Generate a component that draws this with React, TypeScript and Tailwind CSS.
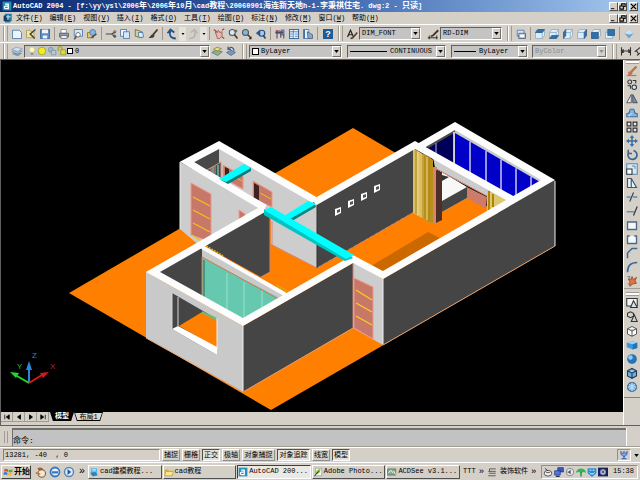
import type { ReactNode } from "react";

const BLUE = "#3a6ea5";
const PALE = "#d6e8f6";
const INK = "#303438";

const ICONS: Record<string, ReactNode> = {
  new: <path d="M2 3h9l3 3v8H2z" fill="#eaf4fc" stroke={BLUE} />,
  open: (
    <>
      <path d="M2 3h5l1 2h4v8H2z" fill="#f0e4a0" stroke="#a89050" />
      <path d="M14 2L7 8l6 6" fill="none" stroke="#404830" strokeWidth="2" />
    </>
  ),
  save: (
    <>
      <path d="M2 2h12v12H2z" fill="#5a8fc4" stroke="#2c5a8c" />
      <path d="M4 2h8v5H4zM5 10h6v4H5z" fill="#eef4fa" />
    </>
  ),
  print: (
    <>
      <path d="M4 2h7v5H4z" fill="#fff" stroke="#707880" />
      <path d="M2 7h12v5H2z" fill="#8c98a8" stroke="#505860" />
      <path d="M4 10h8v4H4z" fill="#e8eef8" stroke="#606870" />
    </>
  ),
  preview: (
    <>
      <path d="M3 2h11v9H3z" fill={PALE} stroke={BLUE} />
      <circle cx="8" cy="9" r="3" fill="#fff" stroke="#555" />
      <path d="M6 11l-3 4" stroke="#555" strokeWidth="2" />
    </>
  ),
  publish: (
    <>
      <path d="M2 6h8v7H2z" fill="#e8c860" stroke="#806820" />
      <circle cx="9" cy="6" r="4" fill="#8cb4d8" stroke={BLUE} />
      <path d="M7 13l7-5" stroke="#404850" strokeWidth="2" />
    </>
  ),
  cut: (
    <>
      <path d="M1 8h8M9 8l5-3M9 8l5 4" stroke="#404850" strokeWidth="1.6" />
      <circle cx="13" cy="5" r="1.6" fill="none" stroke="#804040" />
      <circle cx="13" cy="11" r="1.6" fill="none" stroke="#404850" />
    </>
  ),
  copy: (
    <>
      <path d="M2 2h8v9H2z" fill="#eaf4fc" stroke={BLUE} />
      <path d="M6 5h8v9H6z" fill={PALE} stroke={BLUE} />
    </>
  ),
  paste: (
    <>
      <path d="M3 2l9 3v8l-9-2z" fill="#d8d090" stroke="#606030" />
      <path d="M7 6h6l1 6-6 1z" fill="#dcecf8" stroke={BLUE} />
    </>
  ),
  brush: (
    <>
      <path d="M14 2L8 9" stroke="#503020" strokeWidth="2.4" />
      <path d="M9 8c-4 0-4 4-7 5 4 1 8 0 8-3z" fill="#483838" />
    </>
  ),
  undo: <path d="M13 14C5 14 4 8 6 4M2 7l4-5 5 4" fill="none" stroke="#20508c" strokeWidth="2.4" />,
  redo: <path d="M3 14c8 0 9-6 7-10M14 7l-4-5-5 4" fill="none" stroke="#b4b4b0" strokeWidth="2" />,
  pan: (
    <>
      <path d="M3 5l3 1 1-3 2 3 3-1v6l-3 3H6z" fill="#e8b8a8" stroke="#904848" />
      <path d="M1 2l4 3M12 12l3 2M12 3l3-2" stroke="#b04040" strokeWidth="1.4" />
    </>
  ),
  zoom: (
    <>
      <circle cx="7" cy="6" r="4" fill={PALE} stroke="#505860" strokeWidth="1.4" />
      <path d="M10 9l4 5" stroke="#503828" strokeWidth="2.2" />
      <path d="M12 2v4M10 4h4" stroke="#444" />
    </>
  ),
  zoomWindow: (
    <>
      <circle cx="6" cy="6" r="4" fill="#88b4dc" stroke="#505860" strokeWidth="1.4" />
      <path d="M9 9l4 4" stroke="#404040" strokeWidth="2.2" />
      <path d="M14 11v4h-4z" fill="#222" />
    </>
  ),
  zoomPrev: (
    <>
      <circle cx="9" cy="7" r="4" fill="#a8cce8" stroke="#20508c" strokeWidth="1.6" />
      <path d="M11 10l3 4" stroke="#404040" strokeWidth="2" />
      <path d="M1 7l6-5v9z" fill="#28588c" />
    </>
  ),
  props: (
    <>
      <path d="M2 3h6v5H2z" fill="#d85868" />
      <path d="M9 2h5v8H9z" fill="#6078b8" />
      <path d="M2 6h10M4 3v11M9 4v9M13 9v5" stroke="#50485c" strokeWidth="1.4" />
    </>
  ),
  design: (
    <>
      <path d="M2 2h12v12H2z" fill="#e8f2fa" stroke={BLUE} strokeWidth="1.4" />
      <path d="M7 2v12M2 5h12M9 8h4M9 11h4M3 8h3M3 11h3" stroke={BLUE} />
    </>
  ),
  palettes: (
    <>
      <path d="M2 2h7v12H2z" fill="#e8f2fa" stroke={BLUE} />
      <path d="M3 2v12" stroke={BLUE} strokeWidth="2" />
      <path d="M7 5l7 4v5H8z" fill="#88a8c8" stroke="#405878" />
    </>
  ),
  textStyle: (
    <>
      <path d="M2 12L6 3l4 9M4 9h5" fill="none" stroke="#222" strokeWidth="1.6" />
      <path d="M15 6L9 13l-3 1" fill="none" stroke="#583828" strokeWidth="2" />
    </>
  ),
  dimStyle: (
    <>
      <path d="M1 13h13M3 10v5M13 10v5" stroke="#222" strokeWidth="1.2" />
      <path d="M15 3l-7 7-3 1" fill="none" stroke="#483028" strokeWidth="2.4" />
    </>
  ),
  views: (
    <>
      <path d="M3 3h9v8H3z" fill={PALE} stroke={BLUE} />
      <path d="M5 7h9v7H5z" fill="#b0c4d8" stroke="#405878" />
      <path d="M7 9h5v3H7z" fill="#fff" />
    </>
  ),
  layers: (
    <>
      <path d="M1 12l6-3 8 2-6 4z" fill="#7c98b8" />
      <path d="M1 9l6-3 8 2-6 4z" fill="#a8c0d8" stroke="#58789c" strokeWidth=".6" />
      <path d="M1 6l6-3 8 2-6 4z" fill="#d0e0ee" stroke="#58789c" strokeWidth=".6" />
    </>
  ),
  bulb: (
    <>
      <circle cx="8" cy="6" r="4" fill="#fffbb8" stroke="#d8d080" />
      <path d="M6 11h4v3H6z" fill="#888" />
    </>
  ),
  sun: <circle cx="8" cy="8" r="6" fill="#f0ee20" stroke="#909018" />,
  freeze: (
    <>
      <circle cx="6" cy="6" r="4" fill="#a0b8c0" stroke="#6888a0" />
      <path d="M7 7h7v7H7z" fill="#b8ccd4" stroke="#6888a0" />
    </>
  ),
  unlock: (
    <>
      <path d="M2 8V4a3 3 0 0 1 6 0v3" fill="none" stroke="#a8a820" strokeWidth="2" />
      <path d="M6 6h8v8H6z" fill="#e0de28" stroke="#808020" />
    </>
  ),
  layerPrev: (
    <>
      <path d="M1 10l6-3 8 2-6 5z" fill="#8cb0a0" stroke="#587868" />
      <path d="M3 6l5-3 6 2-5 3z" fill="#e8e070" stroke="#808040" />
    </>
  ),
  layerState: (
    <>
      <path d="M2 10l6-3 6 3-6 4z" fill="#7898c0" stroke="#48688c" />
      <path d="M12 8C12 3 8 2 5 5M4 2v4h4" fill="none" stroke="#405c90" strokeWidth="1.6" />
    </>
  ),
  dimLinear: <path d="M2 3v11M14 3v11M2 8h12M5 6L2 8l3 2M11 6l3 2-3 2" fill="none" stroke="#333" strokeWidth="1.4" />,
  dimAligned: <path d="M1 9l9-7M4 14l9-7M3 7l3 5M9 3l3 5" stroke="#333" strokeWidth="1.4" />,
  isoView: (
    <>
      <path d="M8 1l6 6-6 7-6-7z" fill="#68a0d0" />
      <path d="M8 1l6 6-6 2-6-2z" fill="#c8e0f0" />
    </>
  ),
  erase: (
    <>
      <path d="M14 2L7 9" stroke="#b07830" strokeWidth="3" />
      <path d="M3 9l4-1 2 3-3 3H3z" fill="#d86858" />
      <path d="M1 14h13" stroke="#8c9040" strokeWidth="1.6" />
    </>
  ),
  copyObj: (
    <>
      <circle cx="5" cy="4" r="2.6" fill="none" stroke={INK} strokeWidth="1.4" />
      <circle cx="11" cy="11" r="3" fill={PALE} stroke={INK} strokeWidth="1.4" />
      <path d="M9 2h4v4M2 9h4v4" fill="none" stroke={INK} strokeWidth="1.4" />
    </>
  ),
  mirror: (
    <>
      <path d="M7 2v11H1z" fill="#e8eef4" stroke={INK} />
      <path d="M9 2v11h6z" fill="#6898c4" stroke={INK} />
    </>
  ),
  offset: (
    <>
      <path d="M1 13V9c3 0 4-1 4-4s6-3 6 0 1 4 4 4v4z" fill="#88b4dc" stroke={BLUE} strokeWidth="1.4" />
      <path d="M4 13v-2c3 0 3-2 4-3" fill="none" stroke="#e0f0fc" />
    </>
  ),
  array: <path d="M1.500 1.500h5v5h-5zM9.500 1.500h5v5h-5zM1.500 9.500h5v5h-5zM9.500 9.500h5v5h-5z" fill="#ece8e0" stroke={INK} strokeWidth="1.600" />,
  move: <path d="M8 0l3 4H9v3h3V5l4 3-4 3V9H9v3h2l-3 4-3-4h2V9H4v2L0 8l4-3v2h3V4H5z" fill={BLUE} />,
  rotate: <path d="M4 4a6 6 0 1 0 6-2M3 1v5h5" fill="none" stroke="#38648c" strokeWidth="2.2" />,
  scale: (
    <>
      <path d="M1 1h14v14H1z" fill="#d8e8f4" stroke="#5888b0" strokeWidth="1.4" />
      <path d="M1 8h7v7H1z" fill="#fff" stroke={INK} strokeWidth="1.4" />
      <path d="M8 4h4v4" fill="none" stroke={BLUE} />
    </>
  ),
  stretch: <path d="M2 2h5l7 12H2zM7 2v12" fill="#eaf4fc" stroke="#405870" strokeWidth="1.6" />,
  trim: (
    <>
      <path d="M1 8h5M9 8h6" stroke="#5888b8" strokeWidth="1.8" />
      <path d="M10 2L5 14" stroke={INK} strokeWidth="1.4" />
    </>
  ),
  extend: (
    <>
      <path d="M1 9h10" stroke="#5888b8" strokeWidth="1.8" />
      <path d="M15 2l-5 12" stroke={INK} strokeWidth="1.6" />
    </>
  ),
  breakAt: <path d="M2 4h12v10H2z" fill="#f4f8fc" stroke="#4c6884" strokeWidth="1.800" />,
  breakObj: <path d="M5 4H2v10h12V4h-3" fill="#f4f8fc" stroke="#4c6884" strokeWidth="1.800" />,
  chamfer: <path d="M2 15V8l6-6h7" fill="none" stroke="#38689c" strokeWidth="2" />,
  fillet: <path d="M2 15C2 6 6 2 15 2" fill="none" stroke="#38689c" strokeWidth="2.2" />,
  explode: (
    <>
      <path d="M3 5l4 1 1-4 2 4 4-3-2 5 2 3-5 1-4 3V9z" fill="#d87840" stroke="#904020" />
      <path d="M2 2h3v3M2 12h3" stroke="#506070" fill="none" />
    </>
  ),
  wire2d: (
    <>
      <path d="M1 2h14v10H1z" fill="#f4f4f0" stroke={INK} strokeWidth="1.4" />
      <path d="M10 5l5 9H6z" fill="#d8e4ec" stroke={INK} strokeWidth="1.4" />
    </>
  ),
  wire3d: (
    <>
      <path d="M2 3l4-2 4 2v4L6 9 2 7z" fill="none" stroke={INK} strokeWidth="1.4" />
      <path d="M11 5l4 9H7z" fill="#c8d0d8" stroke={INK} strokeWidth="1.4" />
    </>
  ),
  hidden: <path d="M2 5l6-3 6 3v7l-6 3-6-3zM2 5l6 3 6-3M8 8v7" fill="#fff" stroke="#505050" strokeWidth="1.3" />,
  flat: (
    <>
      <path d="M1 5l8-2 6 2v7l-6 2-8-3z" fill="#3c98d8" />
      <path d="M1 5l8-2 6 2-6 2z" fill="#98d4f8" />
      <path d="M9 7l6-2v7l-6 2z" fill="#2474b4" />
    </>
  ),
  gouraud: (
    <>
      <circle cx="8" cy="8" r="6.500" fill="#2874b4" />
      <circle cx="6" cy="6" r="3" fill="#90ccf4" />
    </>
  ),
  flatEdge: <path d="M2 5l6-3 6 3v7l-6 3-6-3zM2 5l6 3 6-3M8 8v7" fill="#70b0e0" stroke="#203c58" strokeWidth="1.5" />,
  gouraudEdge: (
    <>
      <circle cx="8" cy="8" r="6" fill="#70b0e0" stroke="#2c5c8c" strokeWidth="1.4" />
      <path d="M2 8h12M8 2v12M4 4c3 3 5 3 8 0M4 12c3-3 5-3 8 0" fill="none" stroke="#e0f0fc" />
    </>
  ),
  windows: (
    <>
      <path d="M2 4c2-2 4-1 6 0v4C6 7 4 6 2 8z" fill="#e05028" />
      <path d="M9 4c2 1 4 1 6-1v5c-2 1-4 1-6 0z" fill="#58a838" />
      <path d="M1 9c2-2 4-1 6 0v4c-2-1-4-2-6 0z" fill="#3878d0" />
      <path d="M8 9c2 1 4 1 6-1v5c-2 1-4 1-6 0z" fill="#f0c028" />
    </>
  ),
  desktop: (
    <>
      <path d="M3 3c5-3 9 1 8 3L6 7z" fill="#a86030" />
      <circle cx="9" cy="10" r="5" fill="#f4e8d0" stroke="#805838" strokeWidth="1.4" />
      <path d="M1 9l6 2" stroke="#c87840" strokeWidth="2" />
    </>
  ),
  messenger: (
    <>
      <circle cx="8" cy="8" r="6" fill="#e8f2fc" stroke="#3878c0" strokeWidth="2.4" />
      <path d="M4 7h8v3H4z" fill="#3878c0" />
    </>
  ),
  player: (
    <>
      <circle cx="8" cy="8" r="6" fill="#e4eef8" stroke="#5888b8" strokeWidth="2" />
      <path d="M6 4l5 4-5 4z" fill="#2858a0" />
    </>
  ),
  notebook: (
    <>
      <path d="M3 2h10v11H3z" fill="#58b4e4" />
      <path d="M2 9l8-1 4 5-8 2z" fill="#2c84b8" />
      <path d="M5 4h6M5 6h6" stroke="#e0f4fc" />
    </>
  ),
  folder: (
    <>
      <path d="M1 4h5l2 2h6v8H1z" fill="#d8b038" />
      <path d="M3 7h12l-2 7H1z" fill="#fce888" stroke="#a88828" strokeWidth=".8" />
    </>
  ),
  acad: (
    <>
      <path d="M1 1h14v14H1z" fill="#2890b8" />
      <path d="M5 5h5v7H6c-3 0-3-4 0-4h4" fill="none" stroke="#fff" strokeWidth="2" />
    </>
  ),
  drawing: (
    <>
      <path d="M3 1h11v11l-3 3H3z" fill="#2878a8" />
      <path d="M1 4h9v9H1z" fill="#183c60" />
      <path d="M5 6h7M8 3v8" stroke="#a8e0f4" strokeWidth="2" />
    </>
  ),
  photoshop: (
    <>
      <path d="M4 2h10v12H4z" fill="#f8f8f4" stroke="#889080" />
      <path d="M12 3c-6 1-8 5-7 8 4 0 7-3 7-8z" fill="#80b830" />
      <path d="M2 15l7-8" stroke="#283818" strokeWidth="1.6" />
    </>
  ),
  acdsee: (
    <>
      <path d="M1 3h13v10H1z" fill="#88a890" stroke="#486050" />
      <path d="M2 10l4-5 3 4 2-2 3 5" fill="none" stroke="#e8f4e8" strokeWidth="1.6" />
    </>
  ),
  keyboard: <path d="M4 3h10M2 7h12M3 10h11M2 14h12M4 3v4" fill="none" stroke="#505050" strokeWidth="1.4" />,
  mouse: (
    <>
      <ellipse cx="8" cy="10" rx="6" ry="4.500" fill="#f4f4f4" stroke="#404040" strokeWidth="1.4" />
      <path d="M3 2l5 4M5 9h6" stroke="#404040" strokeWidth="1.4" />
    </>
  ),
  network: (
    <>
      <path d="M6 1h9v7H6z" fill="#3858c8" stroke="#18286c" />
      <path d="M1 6h9v7H1z" fill="#5078e0" stroke="#18286c" />
      <path d="M3 15h6" stroke="#333" strokeWidth="2" />
    </>
  ),
  volume: (
    <>
      <circle cx="8" cy="8" r="6" fill="#e8e8ec" stroke="#808088" strokeWidth="1.4" />
      <path d="M4 7h2l3-3v8L6 9H4z" fill="#505060" />
    </>
  ),
  umbrella: (
    <>
      <path d="M0 9c1-9 15-9 16 0l-4-1-4 1-4-1z" fill="#30b850" />
      <path d="M8 8v7" stroke="#207838" strokeWidth="2" />
    </>
  ),
  shield: (
    <>
      <path d="M1 2h14v8l-7 6-7-6z" fill="#2c8cd0" />
      <path d="M4 5h3M9 5h3M4 9c2 3 6 3 8 0" fill="none" stroke="#e8f8fc" strokeWidth="1.6" />
    </>
  ),
  reel: (
    <>
      <path d="M0 1h16v14H0z" fill="#182058" />
      <circle cx="8" cy="8" r="4" fill="#e0d890" stroke="#7888c8" strokeWidth="2" />
      <circle cx="8" cy="8" r="1.500" fill="#182058" />
    </>
  ),
  comm: (
    <>
      <path d="M3 2l3 4 2-4 3 4 2-4v5l-5 4-5-4z" fill="#78a0e0" stroke="#2850a0" />
      <path d="M8 10v3M4 14h8" stroke="#2850a0" strokeWidth="1.6" />
    </>
  ),
};

// box with one shaded side, for the preset view buttons
const CUBE_FACES = {
  viewTop: "M5 2h9l-3 4H2z",
  viewBottom: "M5 10h9l-3 4H2z",
  viewLeft: "M2 6l3-4v8l-3 4z",
  viewRight: "M11 6l3-4v8l-3 4z",
  viewFront: "M2 6h9v8H2z",
  viewBack: "M5 2h9v8H5z",
};

for (const [name, face] of Object.entries(CUBE_FACES)) {
  ICONS[name] = (
    <>
      <path d="M2 6l3-4h9v8l-3 4H2z" fill="#dcecf8" stroke="#88a8c4" />
      <path d="M2 6h9v8M11 6l3-4" fill="none" stroke="#88a8c4" />
      <path d={face} fill="#3470a8" stroke="#285c90" />
    </>
  );
}

function Icon({ name, size = "h-[10px] w-[10px]" }: { name: string; size?: string }) {
  return (
    <svg viewBox="0 0 16 16" className={`shrink-0 ${size}`} aria-hidden="true">
      {ICONS[name]}
    </svg>
  );
}

function ToolButton({ name }: { name: string }) {
  return (
    <button type="button" aria-label={name} className="flex h-[14px] w-[14px] shrink-0 items-center justify-center">
      <Icon name={name} size="h-3 w-3" />
    </button>
  );
}

function Separator() {
  return <div className="mx-[2px] h-[13px] w-px shrink-0 bg-[#9c9890]" />;
}

function Grip() {
  return (
    <div className="mx-[2px] flex h-[15px] w-[5px] shrink-0 justify-between border-l border-[#a09c94]">
      <div className="w-px bg-white" />
      <div className="w-px bg-[#a09c94]" />
    </div>
  );
}

function Tools({ names }: { names: string[] }) {
  return (
    <>
      {names.map((name) => (
        <ToolButton key={name} name={name} />
      ))}
    </>
  );
}

interface ComboProps {
  label: string;
  value: string;
  className: string;
  children?: ReactNode;
  align?: string;
  disabled?: boolean;
}

function Combo({ label, value, className, children, align = "", disabled }: ComboProps) {
  return (
    <label
      className={`flex h-[13px] shrink-0 items-center border border-t-[#606060] border-l-[#606060] border-r-white border-b-white bg-[#c4c4c4] pl-[2px] ${className}`}
    >
      {children}
      <select
        aria-label={label}
        disabled={disabled}
        className={`h-[11px] min-w-0 flex-1 appearance-none bg-transparent text-[7px] leading-[11px] disabled:text-[#8c8c8c] disabled:opacity-100 ${align}`}
      >
        <option>{value}</option>
      </select>
      <span className="flex h-[11px] w-[9px] shrink-0 items-center justify-center border border-t-white border-l-white border-r-[#707070] border-b-[#707070] bg-[#d4d0c8]">
        <svg viewBox="0 0 6 4" className="h-[3px] w-[5px]">
          <path d="M0 0h6L3 4z" fill={disabled ? "#8c8c8c" : "#000"} />
        </svg>
      </span>
    </label>
  );
}

function WindowButtons() {
  const box =
    "flex h-[9px] w-[9px] items-center justify-center border border-t-white border-l-white border-r-[#505050] border-b-[#505050] bg-[#d4d0c8]";
  return (
    <div className="ml-auto flex shrink-0 items-center pr-[2px]">
      <button type="button" aria-label="最小化" className={box}>
        <svg viewBox="0 0 8 8" className="h-[7px] w-[7px]"><path d="M1 6h4v1H1z" /></svg>
      </button>
      <button type="button" aria-label="还原" className={box}>
        <svg viewBox="0 0 8 8" className="h-[7px] w-[7px]" fill="none" stroke="#000">
          <path d="M3 3V1h4v3H5M1 3.500h4V7H1z" strokeWidth="1.200" />
        </svg>
      </button>
      <button type="button" aria-label="关闭" className={`${box} ml-[2px]`}>
        <svg viewBox="0 0 8 8" className="h-[7px] w-[7px]" stroke="#000" strokeWidth="1.400"><path d="M1 1l6 6M7 1L1 7" /></svg>
      </button>
    </div>
  );
}

const MENUS = [
  "文件(F)", "编辑(E)", "视图(V)", "插入(I)", "格式(O)", "工具(T)",
  "绘图(D)", "标注(N)", "修改(M)", "窗口(W)", "帮助(H)",
];

function TitleBar() {
  return (
    <header className="flex h-[12px] shrink-0 items-center bg-gradient-to-r from-[#0a2a72] via-[#3c64ac] to-[#a6caf0] pl-[2px]">
      <Icon name="acad" />
      <h1 className="ml-[1px] whitespace-pre text-[7px] font-bold leading-[12px] text-white">
        AutoCAD 2004 - [f:\yy\ysl\2006<span className="text-[8px]">年</span>\2006<span className="text-[8px]">年</span>10
        <span className="text-[8px]">月</span>\cad<span className="text-[8px]">教程</span>\20060901
        <span className="text-[8px]">海连新天地</span>h-1-<span className="text-[8px]">李秉祺住宅</span>. dwg:2 -{" "}
        <span className="text-[8px]">只读</span>]
      </h1>
      <WindowButtons />
    </header>
  );
}

function MenuBar() {
  return (
    <nav className="flex h-[12px] shrink-0 items-center pl-[3px]">
      <Icon name="drawing" />
      <div className="ml-[3px] flex gap-[7px]">
        {MENUS.map((menu) => (
          <button key={menu} type="button" className="whitespace-nowrap text-[7px] leading-[11px]">
            {menu.slice(0, 3)}
            <u>{menu[3]}</u>
            {menu.slice(4)}
          </button>
        ))}
      </div>
      <WindowButtons />
    </nav>
  );
}

function DropArrow() {
  return (
    <button type="button" aria-label="列表" className="flex h-[14px] w-[7px] shrink-0 items-center justify-center bg-[#e4e2dc]">
      <svg viewBox="0 0 6 4" className="h-[2px] w-[4px]"><path d="M0 0h6L3 4z" /></svg>
    </button>
  );
}

function StandardToolbar() {
  return (
    <div className="flex h-[18px] shrink-0 items-center overflow-hidden border-t border-white pl-[1px]">
      <Grip />
      <Tools names={["new", "open", "save"]} />
      <Separator />
      <Tools names={["print", "preview", "publish"]} />
      <Separator />
      <Tools names={["cut", "copy", "paste", "brush"]} />
      <Separator />
      <ToolButton name="undo" />
      <DropArrow />
      <ToolButton name="redo" />
      <DropArrow />
      <Separator />
      <Tools names={["pan", "zoom", "zoomWindow", "zoomPrev"]} />
      <Separator />
      <Tools names={["props", "design", "palettes"]} />
      <Separator />
      <button
        type="button"
        aria-label="帮助"
        className="mx-[3px] h-[10px] w-[10px] shrink-0 bg-[#1c5c98] text-center font-['Liberation_Sans'] text-[9px] font-bold leading-[10px] text-white"
      >
        ?
      </button>
      <Grip />
      <ToolButton name="textStyle" />
      <Combo label="文字样式" value="DIM_FONT" className="w-[62px]" />
      <div className="w-[5px] shrink-0" />
      <ToolButton name="dimStyle" />
      <Combo label="标注样式" value="RD-DIM" className="w-[62px]" />
      <div className="w-[3px] shrink-0" />
      <Grip />
      <ToolButton name="views" />
      <Separator />
      <Tools names={Object.keys(CUBE_FACES)} />
      <Separator />
      <Tools names={["isoView"]} />
    </div>
  );
}

function LayerToolbar() {
  return (
    <div className="flex h-[17px] shrink-0 items-center overflow-hidden border-t border-white pl-[1px]">
      <Grip />
      <ToolButton name="layers" />
      <Combo label="图层" value="0" className="w-[186px]">
        <Icon name="bulb" />
        <Icon name="sun" />
        <Icon name="freeze" />
        <Icon name="unlock" />
        <span className="mr-[2px] h-[6px] w-[6px] border border-black bg-white" />
      </Combo>
      <Tools names={["layerPrev", "layerState"]} />
      <div className="w-[2px] shrink-0" />
      <Grip />
      <Combo label="颜色" value="ByLayer" className="w-[93px]">
        <span className="mr-[2px] h-[7px] w-[7px] border border-black bg-white" />
      </Combo>
      <div className="w-[5px] shrink-0" />
      <Combo label="线型" value="CONTINUOUS" className="w-[99px]">
        <span className="mr-[3px] h-px w-[37px] bg-black" />
      </Combo>
      <div className="w-[5px] shrink-0" />
      <Combo label="线宽" value="ByLayer" className="w-[77px]">
        <span className="mr-[3px] h-px w-[22px] bg-black" />
      </Combo>
      <div className="w-[4px] shrink-0" />
      <Combo label="打印样式" value="ByColor" className="w-[75px]" disabled />
      <div className="w-[3px] shrink-0" />
      <Grip />
      <Tools names={["dimLinear", "dimAligned"]} />
    </div>
  );
}

const MODIFY_TOOLS = [
  "erase", "copyObj", "mirror", "offset", "array", "move", "rotate", "scale",
  "stretch", "trim", "extend", "breakAt", "breakObj", "chamfer", "fillet", "explode",
];
const SHADE_TOOLS = ["wire2d", "wire3d", "hidden", "flat", "gouraud", "flatEdge", "gouraudEdge"];

function SideGrip() {
  return <div className="h-[4px] w-[13px] shrink-0 border-y border-[#a09c94] bg-white" />;
}

function SideToolbar() {
  return (
    <aside className="w-[17px] shrink-0 border-l border-white">
      <div className="flex flex-col items-center border-b border-[#a09c94]">
        <SideGrip />
        <Tools names={MODIFY_TOOLS} />
      </div>
      <div className="flex flex-col items-center border-b border-[#808080] pt-[3px] pb-[3px]">
        <SideGrip />
        <Tools names={SHADE_TOOLS} />
      </div>
    </aside>
  );
}

const NICHES = [[338, 212], [351, 204], [364, 197], [377, 189]];
const MULLIONS = [470, 486, 501, 516, 531];

function House() {
  return (
    <>
      <path d="M69 293L353 128L555 246L271 410Z" fill="#ff8000" />
      <path d="M428 232L440 238L380 273L371 266Z" fill="#cc6800" />

      {/* hall walls */}
      <path d="M317 204L414 148V212L317 268Z" fill="#454545" />
      <path d="M317 268L414 212" stroke="#d08870" strokeDasharray="5 1" />
      {NICHES.map(([x, y]) => (
        <g key={x}>
          <path d={`M${x - 3} ${y - 3}l6 -2v6l-6 3z`} fill="#fff" />
          <path d={`M${x - 1} ${y - 2}l3 -1v3l-3 1z`} fill="#555" />
        </g>
      ))}

      {/* far room */}
      <path d="M425 146L455 129V163Z" fill="#484848" />
      <path d="M427 149L454 133V164Z" fill="#000058" />
      <path d="M436 143V154" stroke="#b8b8d0" />
      <path d="M455 127L548 181L540 185L455 135Z" fill="#cacaca" />
      <path d="M455 133L540 182L514 198L455 164Z" fill="#0000c8" />
      {MULLIONS.map((x) => (
        <path key={x} d={`M${x} ${133 + (x - 455) * 0.577}V${164 + (x - 455) * 0.577}`} stroke="#c8c8e8" strokeWidth="1.500" />
      ))}
      <path d="M454 132V164" stroke="#fff" strokeWidth="1.500" />

      {/* opening towards the bedroom */}
      <path d="M433 157L512 203L505 207L487 196L435 168Z" fill="#cccccc" />
      <path d="M442 172L467 187V198L442 212Z" fill="#f8f8f8" />
      <path d="M442 175L449 177L442 181Z" fill="#333" />
      <path d="M442 201L467 187V198L442 212Z" fill="#454545" />
      <path d="M467 187L487 197L486 209L467 198Z" fill="#cc7c68" />
      <path d="M434 168L487 196" stroke="#e08c78" />
      <path d="M433 167H437V223H433Z" fill="#d88470" />
      <path d="M436 170L442 173V220L436 223Z" fill="#4c3028" />
      <path d="M413 148L433 160V224L413 213Z" fill="#dcc060" />
      <path d="M424 154L433 160V224L424 219Z" fill="#b89018" />
      <path d="M416 150V214M423 154V219M429 157V222" stroke="#a88420" />
      <path d="M418 152V215M427 157V220" stroke="#f0dc90" />
      <path d="M487 190L508 201L487 212Z" fill="#dcc870" />
      <path d="M489 191V210M493 194V207" stroke="#ae8408" strokeWidth="2" />

      {/* service block */}
      <path d="M190 162L219 148L317 204V268L271 244V212Z" fill="#cdcdcd" />
      <path d="M194 162L219 149V163L208 171Z" fill="#484848" />
      <path d="M208 170L221 162V178Z" fill="#305850" />
      <path d="M207 170L221 162M211 168V172M215 166V174M221 162V178" fill="none" stroke="#e88c78" />
      <path d="M213 167V173M218 165V176" stroke="#b0d8cc" />
      <path d="M223 165L243 176V189L223 178Z" fill="#c87868" stroke="#f09888" />
      <path d="M225 167L229 169V179L225 177Z" fill="#3c2420" />
      <path d="M233 176L242 181" stroke="#f0c020" />
      <path d="M253 181L272 192V207L253 199Z" fill="#c87868" stroke="#f09888" />
      <path d="M254 183L259 186V201L254 198Z" fill="#3c2420" />
      <path d="M260 193L271 199" stroke="#f0c020" />
      <path d="M272 221V245L317 268" fill="none" stroke="#d88878" />
      <path d="M317 203V268" stroke="#333" />
      <path d="M180 162L265 209L201 247L180 229Z" fill="#cdcdcd" />
      <path d="M191 183L211 194V242L191 235Z" fill="#c87868" stroke="#f09888" />
      <path d="M193 197L210 206M193 210L210 219M193 223L210 232M192 235L201 241" stroke="#f0c020" strokeWidth="1.400" />
      <path d="M239 210L245 214V219H239Z" fill="#c87868" stroke="#f09888" />
      <path d="M180 162V229" stroke="#eee" />

      {/* front room, inside */}
      <path d="M203 245L270 209V272L261 277Z" fill="#454545" />
      <path d="M270 212V272L261 277" fill="none" stroke="#d08870" />
      <path d="M158 272L202 247V300Z" fill="#454545" />
      <path d="M202 248L289 296L280 302L202 259Z" fill="#cacaca" />
      <path d="M202 257L283 300L243 322L202 300Z" fill="#66c8ae" />
      <path d="M202 299V257L280 300" fill="none" stroke="#d87848" />
      <path d="M204 260V299" stroke="#286858" />
      <path d="M227 273V311M244 282V318M262 291V308" stroke="#98e4cc" />
      <path d="M206 246l17 10M277 286l12 6" stroke="#d8a818" strokeWidth="2" strokeDasharray="2 1" />

      {/* outer faces */}
      <path d="M146 272L243 326V392L146 338Z" fill="#c9c9c9" />
      <path d="M243 326L353 263V328L243 392Z" fill="#454545" />
      <path d="M353 261L383 279V345L353 328Z" fill="#cdcdcd" />
      <path d="M383 279L555 180V246L383 345Z" fill="#454545" />
      <path d="M146 338L243 392L353 328M383 345L555 246" fill="none" stroke="#e0a070" />
      <path d="M243 326V391M383 279V344M555 181V246" stroke="#f0f0f0" />
      <path d="M353 263V328" stroke="#c08070" />
      <path d="M354 278L373 287V339L354 328Z" fill="#c87868" stroke="#f09888" />
      <path d="M356 290L372 300M356 303L372 312M356 316L372 325" stroke="#f0d020" strokeWidth="1.400" />

      {/* front window */}
      <path d="M172 293L217 319V355L172 329Z" fill="#454545" />
      <path d="M179 326L202 312L217 320V348Z" fill="#ff8000" />
      <path d="M202 311L217 318V321L202 313Z" fill="#70b878" />
      <path d="M172 293V329M178 297V326" stroke="#d8d8d8" />
      <path d="M172 329L178 326L217 347V355Z" fill="#fff" />
      <path d="M217 318V350" stroke="#eee" />

      {/* wall tops */}
      <g fill="none" stroke="#fdfdfd" strokeWidth="7">
        <path d="M265 208L153 272L243 322L353 259L383 275L548 180L455 126L417 148" />
        <path d="M515 201L415 145L315 202" />
        <path d="M265 208L187 162L219 145L318 202" />
        <path d="M202 247L288 296" strokeWidth="4" />
      </g>

      {/* beams */}
      <path d="M221 180L246 166L251 168V171L228 184Z" fill="#007c7c" />
      <path d="M219 179L244 164L251 168L226 182Z" fill="#00ffff" />
      <path d="M287 217L314 202L316 207L292 221Z" fill="#008484" />
      <path d="M284 216L308 201L316 204L290 219Z" fill="#00ffff" />
      <path d="M264 209L264 215L345 261L353 258L350 255Z" fill="#00c4c4" />
      <path d="M264 210L271 207L354 255L346 259Z" fill="#00ffff" />
    </>
  );
}

function AxisIcon() {
  return (
    <g className="font-['Liberation_Sans'] text-[8px]">
      <path d="M29 383V367" stroke="#2888e0" strokeWidth="2" />
      <path d="M29 361l3 9h-6z" fill="#2888e0" />
      <path d="M29 383L17 376" stroke="#20d830" strokeWidth="2" />
      <path d="M10 372l9 1-3 5z" fill="#20d830" />
      <path d="M29 383L42 375" stroke="#d81818" strokeWidth="2" />
      <path d="M49 372l-6 6-3-5z" fill="#d81818" />
      <text x="32" y="358" fill="#2c80e0">Z</text>
      <text x="17" y="369" fill="#20c030">Y</text>
      <text x="50" y="369" fill="#c81c1c">X</text>
    </g>
  );
}

function ModelTabs() {
  const arrows = ["M1 1v6M7 1L3 4l4 3z", "M6 1L2 4l4 3z", "M2 1l4 3-4 3z", "M7 1v6M1 1l4 3-4 3z"];
  return (
    <div className="flex h-[13px] shrink-0 items-start">
      {arrows.map((d) => (
        <button
          key={d}
          type="button"
          aria-label="切换布局"
          className="flex h-[10px] w-[12px] items-center justify-center border-r border-b border-[#a09c94]"
        >
          <svg viewBox="0 0 8 8" className="h-[6px] w-[6px]" stroke="#000"><path d={d} /></svg>
        </button>
      ))}
      <button
        type="button"
        className="ml-[1px] h-[9px] w-[24px] bg-black text-[7px] font-bold leading-[9px] text-white [clip-path:polygon(0_0,100%_0,88%_100%,12%_100%)]"
      >
        模型
      </button>
      <button
        type="button"
        className="h-[9px] w-[29px] bg-black p-px text-[7px] leading-[8px] [clip-path:polygon(0_0,100%_0,90%_100%,10%_100%)]"
      >
        <span className="block h-full bg-[#dcd8d0] [clip-path:polygon(0_0,100%_0,91%_100%,9%_100%)]">布局1</span>
      </button>
    </div>
  );
}

const MODES = [
  { label: "捕捉", on: false },
  { label: "栅格", on: false },
  { label: "正交", on: true },
  { label: "极轴", on: false },
  { label: "对象捕捉", on: false },
  { label: "对象追踪", on: true },
  { label: "线宽", on: false },
  { label: "模型", on: true },
];

function StatusBar() {
  return (
    <div className="flex h-[15px] shrink-0 items-center border-t border-white pl-[3px]">
      <div className="h-[12px] w-[157px] whitespace-pre border border-t-[#808080] border-l-[#808080] border-r-white border-b-white px-px text-[7px] leading-[10px]">
        13281, -40  , 0
      </div>
      <div className="ml-[2px] flex gap-[2px]">
        {MODES.map(({ label, on }) => (
          <button
            key={label}
            type="button"
            aria-pressed={on}
            className={`h-[12px] whitespace-nowrap border px-[1px] text-[7px] leading-[10px] ${
              label.length > 2 ? "w-[33px]" : "w-[18px]"
            } ${
              on
                ? "border-t-[#505050] border-l-[#505050] border-r-white border-b-white bg-[#e4e0da]"
                : "border-t-white border-l-white border-r-[#909090] border-b-[#909090]"
            }`}
          >
            {label}
          </button>
        ))}
      </div>
      <div className="ml-auto flex items-center gap-[3px] pr-[1px]">
        <button type="button" aria-label="通讯中心" className="flex h-[12px] w-[14px] items-center justify-center border border-t-[#909090] border-l-[#909090] border-r-white border-b-white">
          <Icon name="comm" />
        </button>
        <svg viewBox="0 0 6 4" className="h-[3px] w-[5px]"><path d="M0 0h6L3 4z" /></svg>
      </div>
    </div>
  );
}

const TASKS = [
  { icon: "notebook", label: "cad建模教程...", active: false },
  { icon: "folder", label: "cad教程", active: false },
  { icon: "acad", label: "AutoCAD 200...", active: true },
  { icon: "photoshop", label: "Adobe Photo...", active: false },
  { icon: "acdsee", label: "ACDSee v3.1...", active: false },
];
const TRAY = ["mouse", "network", "volume", "umbrella", "shield", "reel"];

function Taskbar() {
  return (
    <footer className="flex h-[18px] shrink-0 items-center border-t border-white pl-[1px] text-[7px]">
      <button
        type="button"
        className="flex h-[14px] w-[30px] shrink-0 items-center border border-t-white border-l-white border-r-[#404040] border-b-[#404040] pl-px font-bold"
      >
        <Icon name="windows" />
        <span className="ml-px whitespace-nowrap text-[8px]">开始</span>
      </button>
      <div className="ml-[3px] flex shrink-0">
        <Tools names={["desktop", "messenger", "player"]} />
      </div>
      <span className="mx-[3px] text-[10px] leading-[10px]">»</span>
      <div className="flex min-w-0 max-w-[372px] flex-1 gap-px">
        {TASKS.map(({ icon, label, active }) => (
          <button
            key={label}
            type="button"
            className={`flex h-[14px] min-w-0 flex-1 items-center gap-px whitespace-nowrap border ${
              active
                ? "border-t-[#404040] border-l-[#404040] border-r-white border-b-white bg-[#ece9e4]"
                : "border-t-white border-l-white border-r-[#505050] border-b-[#505050]"
            }`}
          >
            <Icon name={icon} />
            {label}
          </button>
        ))}
      </div>
      <span className="ml-[3px]">TTT</span>
      <span className="mx-[3px] text-[9px] leading-[10px]">»</span>
      <Icon name="keyboard" />
      <span className="ml-[3px] whitespace-nowrap">装饰软件</span>
      <span className="mx-[3px] text-[9px] leading-[10px]">»</span>
      <div className="ml-auto mr-[2px] flex h-[14px] shrink-0 items-center gap-[1px] border border-t-[#909090] border-l-[#909090] border-r-white border-b-white px-[1px]">
        {TRAY.map((name) => (
          <Icon key={name} name={name} />
        ))}
        <time className="ml-[4px] mr-[2px]">15:38</time>
      </div>
    </footer>
  );
}

export default function App() {
  return (
    <div className="flex h-screen flex-col overflow-hidden bg-[#d4d0c8] font-['Liberation_Mono','Noto_Sans_CJK_SC',monospace] text-black">
      <TitleBar />
      <MenuBar />
      <StandardToolbar />
      <LayerToolbar />
      <div className="flex min-h-0 flex-1 border-t border-[#606060]">
        <main className="flex min-w-0 flex-1 flex-col border-l border-[#606060]">
          <svg viewBox="1 60 622 352" className="min-h-0 w-full flex-1 bg-black" role="img" aria-label="住宅三维模型">
            <House />
            <AxisIcon />
          </svg>
          <ModelTabs />
        </main>
        <SideToolbar />
      </div>
      <label className="flex h-[22px] shrink-0 border-y border-t-[#606060] border-b-[#a09c94] pt-[2px] text-[8px]">
        <span className="mx-[4px] my-[3px] w-[4px] border-x border-[#a09c94]" />
        <span className="flex min-w-0 flex-1 items-end border-t-2 border-l border-[#707068] bg-[#c2c2c2] leading-[10px]">
          <span className="whitespace-nowrap">命令:</span>
          <input type="text" className="h-[10px] min-w-0 flex-1 bg-transparent outline-none" />
        </span>
        <span className="w-[14px] shrink-0 border-l border-white" />
      </label>
      <StatusBar />
      <Taskbar />
    </div>
  );
}
